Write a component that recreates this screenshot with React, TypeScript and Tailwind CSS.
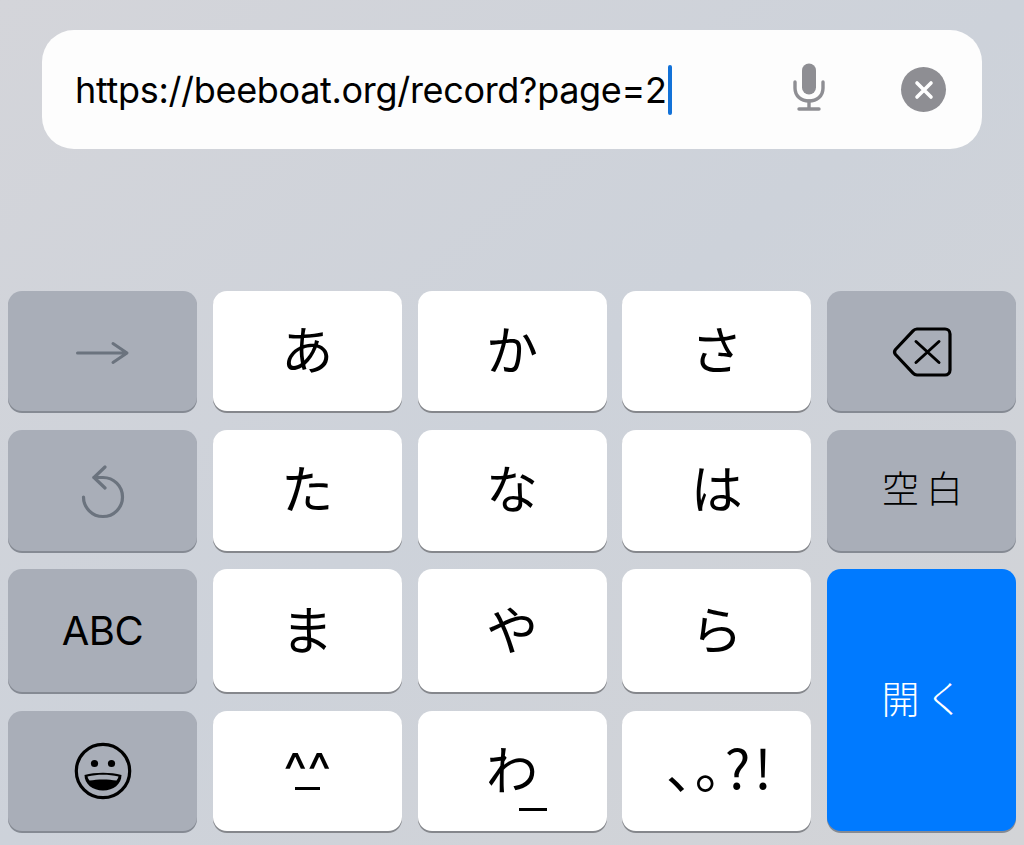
// iOS kana keyboard with a URL field above it

const KEY_BASE = 'flex items-center justify-center rounded-[14px] text-black'
const LIGHT = `${KEY_BASE} bg-white shadow-[0_2px_0_#85878c]`
const DARK = `${KEY_BASE} bg-[#a9aeb8] shadow-[0_2px_0_#858a93]`
const KANA = 'font-["Noto_Sans_CJK_JP",sans-serif] text-[52px] leading-none pb-[6px]'

function KanaKey({ label }: { label: string }) {
  return (
    <div className={LIGHT}>
      <span className={KANA}>{label}</span>
    </div>
  )
}

export default function App() {
  return (
    <div className="flex h-[845px] w-[1024px] flex-col overflow-hidden bg-gradient-to-br from-[#d4d5da] via-[#cdd2da] to-[#d3d4d7] font-['Inter',sans-serif]">
      <div className="mx-[42px] mt-[30px] flex h-[119px] items-center rounded-[32px] bg-[#fdfdfd] pl-[33px] pr-[36px]">
        <span className="whitespace-nowrap text-[36px] leading-none tracking-[-0.32px] text-black">
          https://beeboat.org/record?page=2
        </span>
        <span className="ml-px h-[50px] w-[4px] rounded-full bg-[#1272d8]" />
        <svg className="ml-auto mb-[6px]" width="32" height="48" viewBox="0 0 32 48" fill="none">
          <rect x="9" y="0.500" width="14" height="31" rx="7" fill="#8e8e93" />
          <path d="M2 19v6c0 8 6 13 14 13s14-5 14-13v-6" stroke="#8e8e93" strokeWidth="3.400" strokeLinecap="round" />
          <path d="M16 38v8M6 46h20" stroke="#8e8e93" strokeWidth="3.400" strokeLinecap="round" />
        </svg>
        <div className="ml-[76px] flex h-[45px] w-[45px] items-center justify-center rounded-full bg-[#8e8e93]">
          <svg width="20" height="20" viewBox="0 0 20 20" fill="none">
            <path d="M3 3l14 14M17 3L3 17" stroke="#fff" strokeWidth="3.600" strokeLinecap="round" />
          </svg>
        </div>
      </div>

      <div className="mx-2 mt-[142px] grid h-[540px] grid-cols-5 grid-rows-[120px_121px_123px_120px] gap-x-[15.75px] gap-y-[18.67px]">
        <div className={DARK}>
          <svg className="mt-[3px]" width="54" height="24" viewBox="0 0 54 24" fill="none">
            <path d="M1.500 12h49M37 2.500L51 12 37 21.500" stroke="#6b737e" strokeWidth="3" strokeLinecap="round" strokeLinejoin="round" />
          </svg>
        </div>
        <KanaKey label="あ" />
        <KanaKey label="か" />
        <KanaKey label="さ" />
        <div className={DARK}>
          <svg className="mt-[2px]" width="62" height="52" viewBox="0 0 62 52" fill="none">
            <path d="M26 3h28a5 5 0 0 1 5 5v36a5 5 0 0 1-5 5H26a6 6 0 0 1-4-1.800L4.500 28.500a4 4 0 0 1 0-5L22 4.800A6 6 0 0 1 26 3z" stroke="#000" strokeWidth="3.200" strokeLinejoin="round" />
            <path d="M25 15.500l23 21M48 15.500l-23 21" stroke="#000" strokeWidth="3" strokeLinecap="round" />
          </svg>
        </div>

        <div className={DARK}>
          <svg className="mt-[3px]" width="46" height="54" viewBox="0 0 46 54" fill="none">
            <path d="M3.500 32A19.500 19.500 0 1 0 23 12.500H14" stroke="#6b737e" strokeWidth="3.200" strokeLinecap="round" />
            <path d="M25 2L14 12.500 25 23" stroke="#6b737e" strokeWidth="3.200" strokeLinecap="round" strokeLinejoin="round" />
          </svg>
        </div>
        <KanaKey label="た" />
        <KanaKey label="な" />
        <KanaKey label="は" />
        <div className={DARK}>
          <span className="pb-[6px] pl-[9px] font-['Noto_Sans_CJK_JP',sans-serif] text-[37px] font-light leading-none tracking-[7px]">空白</span>
        </div>

        <div className={DARK}>
          <span className="text-[40px] leading-none tracking-[-0.5px]">ABC</span>
        </div>
        <KanaKey label="ま" />
        <KanaKey label="や" />
        <KanaKey label="ら" />
        <div className={`${KEY_BASE} row-span-2 bg-[#007aff] shadow-[0_2px_0_#858a93]`}>
          <span className="pb-[6px] pl-[8px] font-['Noto_Sans_CJK_JP',sans-serif] text-[38px] font-light leading-none tracking-[6px] text-white">開く</span>
        </div>

        <div className={DARK}>
          <svg width="58" height="58" viewBox="0 0 58 58" fill="none">
            <circle cx="29" cy="29" r="26.700" stroke="#000" strokeWidth="3.200" />
            <circle cx="20.500" cy="21.500" r="3.600" fill="#000" />
            <circle cx="37.500" cy="21.500" r="3.600" fill="#000" />
            <path d="M10.500 33c11-3 26-3 37 0 0 9-8 15.500-18.500 15.500S10.500 42 10.500 33z" fill="#000" />
            <path d="M13.500 34.500c10-2.300 21-2.300 31 0-.5 1.700-1 2.700-2 4-8-1.500-19-1.500-27 0-1-1.300-1.500-2.300-2-4z" fill="#a9aeb8" />
          </svg>
        </div>
        <div className={LIGHT}>
          <div className="flex flex-col items-center">
            <span className="mt-[4px] text-[51px] leading-[30px] tracking-[0px]">^^</span>
            <span className="mt-[1px] h-[3.500px] w-[25px] bg-black" />
          </div>
        </div>
        <div className={`${LIGHT} relative`}>
          <span className={KANA}>わ</span>
          <span className="absolute left-[101px] top-[97px] h-[3px] w-[28px] bg-black" />
        </div>
        <div className={LIGHT}>
          <span className="whitespace-nowrap pb-[10px] pl-[8px] font-['Noto_Sans_CJK_JP',sans-serif] text-[54px] leading-none tracking-[4px]">
            <span className="tracking-[2px]">、</span>
            <span className="tracking-[-24px]">。</span>?!
          </span>
        </div>
      </div>
    </div>
  )
}
